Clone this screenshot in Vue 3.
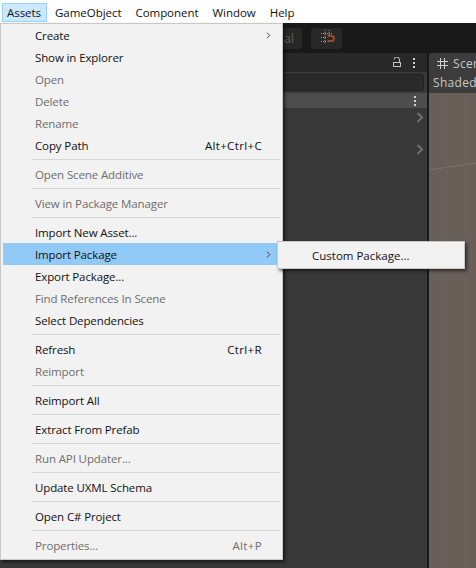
<script setup>
const bar = ['Assets', 'GameObject', 'Component', 'Window', 'Help']
const groups = [
  [
    { t: 'Create', arrow: true },
    { t: 'Show in Explorer' },
    { t: 'Open', off: true },
    { t: 'Delete', off: true },
    { t: 'Rename', off: true },
    { t: 'Copy Path', key: 'Alt+Ctrl+C' },
  ],
  [{ t: 'Open Scene Additive', off: true }],
  [{ t: 'View in Package Manager', off: true }],
  [
    { t: 'Import New Asset...' },
    { t: 'Import Package', arrow: true, hot: true },
    { t: 'Export Package...' },
    { t: 'Find References In Scene', off: true },
    { t: 'Select Dependencies' },
  ],
  [{ t: 'Refresh', key: 'Ctrl+R' }, { t: 'Reimport', off: true }],
  [{ t: 'Reimport All' }],
  [{ t: 'Extract From Prefab' }],
  [{ t: 'Run API Updater...', off: true }],
  [{ t: 'Update UXML Schema' }],
  [{ t: 'Open C# Project' }],
  [{ t: 'Properties...', key: 'Alt+P', off: true }],
]
</script>

<template>
  <div class="app">
    <nav class="bar">
      <span v-for="(b, i) in bar" :key="b" class="bar-item" :class="{ active: i === 0 }">{{ b }}</span>
    </nav>
    <div class="toolbar">
      <div class="tool-btn layout-btn">al</div>
      <div class="tool-btn snap-btn">
        <svg width="22" height="18" viewBox="0 0 22 18" fill="none">
          <path d="M9 1v14M13 1v5M5 4.500h11M5 8.500h5M5 12.500h5" stroke="#9a9a9a" stroke-dasharray="1 1" />
          <path d="M11.500 7h4a2.500 2.500 0 0 1 0 5h-4" stroke="#a5482a" stroke-width="2" />
        </svg>
      </div>
    </div>
    <div class="panels">
      <section class="project">
        <div class="project-tab">
          <svg class="lock" width="10" height="11" viewBox="0 0 10 11" fill="none">
            <path d="M2 2.500A2.700 2.700 0 0 1 7.500 3v2.500" stroke="#c4c4c4" />
            <rect x="1.500" y="5.500" width="7" height="4" stroke="#c4c4c4" />
          </svg>
          <span class="dots"><i></i><i></i><i></i></span>
        </div>
        <div class="search-row"><div class="search"></div></div>
        <div class="selected-row"><span class="dots"><i></i><i></i><i></i></span></div>
        <div class="project-body">
          <svg class="chev first" width="8" height="11" viewBox="0 0 8 11" fill="none"><path d="M1.500 1l4.500 4.500L1.500 10" stroke="#6f6f6f" stroke-width="2" /></svg>
          <svg class="chev second" width="8" height="11" viewBox="0 0 8 11" fill="none"><path d="M1.500 1l4.500 4.500L1.500 10" stroke="#6f6f6f" stroke-width="2" /></svg>
        </div>
      </section>
      <section class="scene">
        <div class="scene-tab">
          <svg class="hash" width="11" height="11" viewBox="0 0 11 11" fill="none"><path d="M3.500 0v11M7.500 0v11M0 3.500h11M0 7.500h11" stroke="#d0d0d0" /></svg>
          <span>Scene</span>
        </div>
        <div class="scene-tools">Shaded</div>
        <div class="scene-view">
          <svg class="scene-grid" width="47" height="475" viewBox="0 0 47 475" fill="none">
            <path d="M0 77 47 70" stroke="#7a726b" />
            <path d="M18 0V475M38 0V475" stroke="#6c645d" />
          </svg>
        </div>
      </section>
    </div>

    <div class="menu">
      <template v-for="(g, gi) in groups" :key="gi">
        <div v-if="gi" class="sep"></div>
        <div v-for="it in g" :key="it.t" class="row" :class="{ off: it.off, hot: it.hot }">
          <span class="label">{{ it.t }}</span>
          <span v-if="it.key" class="key">{{ it.key }}</span>
          <svg v-if="it.arrow" class="arrow" width="5" height="7" viewBox="0 0 5 7" fill="none"><path d="M1 .7 3.800 3.500 1 6.300" stroke="#404040" /></svg>
        </div>
      </template>
    </div>
    <div class="submenu">
      <div class="row"><span class="label">Custom Package...</span></div>
    </div>
  </div>
</template>

<style>
html, body { margin: 0; background: #191919; }
</style>

<style scoped>
.app {
  position: relative;
  width: 476px;
  height: 568px;
  overflow: hidden;
  display: flex;
  flex-direction: column;
  background: #191919;
  font-family: "Open Sans", "Noto Sans", sans-serif;
  font-size: 11.5px;
  letter-spacing: -0.12px;
  color: #111;
}
.bar {
  height: 23px;
  flex: none;
  background: #fff;
  display: flex;
  align-items: flex-start;
  padding: 3px 0 0 2px;
  box-sizing: border-box;
  letter-spacing: -0.04px;
}
.bar-item {
  height: 19px;
  line-height: 20px;
  padding: 0 6px 0 5px;
  margin-right: 3px;
  box-sizing: border-box;
}
.bar-item.active {
  background: #cce8ff;
  box-shadow: inset 0 0 0 1px #99d1ff;
}
.toolbar {
  height: 30px;
  flex: none;
  display: flex;
  align-items: center;
  gap: 9px;
  padding-left: 252px;
  background: #191919;
}
.tool-btn {
  height: 21px;
  background: #272727;
  border-radius: 3px;
  display: flex;
  align-items: center;
  justify-content: center;
}
.layout-btn { width: 50px; color: #5e5e5e; font-size: 13px; justify-content: flex-end; padding-right: 8px; box-sizing: border-box; }
.snap-btn { width: 31px; }
.panels { flex: 1; display: flex; gap: 2px; min-height: 0; }
.project { width: 427px; flex: none; display: flex; flex-direction: column; background: #383838; }
.project-tab {
  height: 19px;
  background: #282828;
  display: flex;
  align-items: center;
  justify-content: flex-end;
  gap: 11px;
  padding-right: 12px;
}
.lock { display: block; }
.dots { display: flex; flex-direction: column; gap: 2px; }
.dots i { display: block; width: 2px; height: 2px; background: #d0d0d0; }
.search-row { height: 21px; background: #383838; padding: 2px 3px 0 0; box-sizing: border-box; }
.search { height: 15px; background: #2a2a2a; border: 1px solid #212121; border-radius: 3px; }
.selected-row {
  height: 15px;
  background: #4d4d4d;
  display: flex;
  align-items: center;
  justify-content: flex-end;
  padding-right: 11px;
}
.project-body { position: relative; flex: 1; background: #383838; }
.chev { position: absolute; left: 416px; }
.chev.first { top: 4px; }
.chev.second { top: 36px; }
.scene { flex: 1; display: flex; flex-direction: column; min-width: 0; overflow: hidden; }
.scene-tab {
  height: 20px;
  background: #3c3c3c;
  border-radius: 3px 0 0 0;
  color: #c8c8c8;
  display: flex;
  align-items: center;
  gap: 5px;
  padding-left: 8px;
  font-size: 12px;
  letter-spacing: .3px;
  white-space: nowrap;
}
.hash { flex: none; display: block; }
.scene-tools {
  height: 20px;
  line-height: 19px;
  background: #3c3c3c;
  color: #c8c8c8;
  padding-left: 4px;
  font-size: 12px;
  letter-spacing: .3px;
  white-space: nowrap;
}
.scene-view { position: relative; flex: 1; background: #675f58; }
.scene-grid { position: absolute; left: 0; top: 0; }

.menu, .submenu {
  position: absolute;
  background: #f2f2f2;
  border: 1px solid #c8c8c8;
  box-shadow: 2px 2px 3px rgba(0, 0, 0, .55);
  box-sizing: border-box;
}
.menu { left: 0; top: 23px; width: 283px; height: 537px; padding: 0 2px; }
.submenu { left: 277px; top: 241px; width: 188px; height: 28px; padding: 2px 0; letter-spacing: 0; }
.row {
  height: 22px;
  display: flex;
  align-items: center;
  padding-left: 32px;
  position: relative;
  white-space: nowrap;
}
.row.off { color: #6d6d6d; }
.row.hot { background: #91c9f7; }
.key { position: absolute; right: 18px; letter-spacing: .35px; }
.arrow { position: absolute; right: 9px; top: 8px; }
.sep { height: 1px; margin: 3px 0 3px 29px; background: #d7d7d7; }
.submenu .row { padding-left: 34px; }
</style>
